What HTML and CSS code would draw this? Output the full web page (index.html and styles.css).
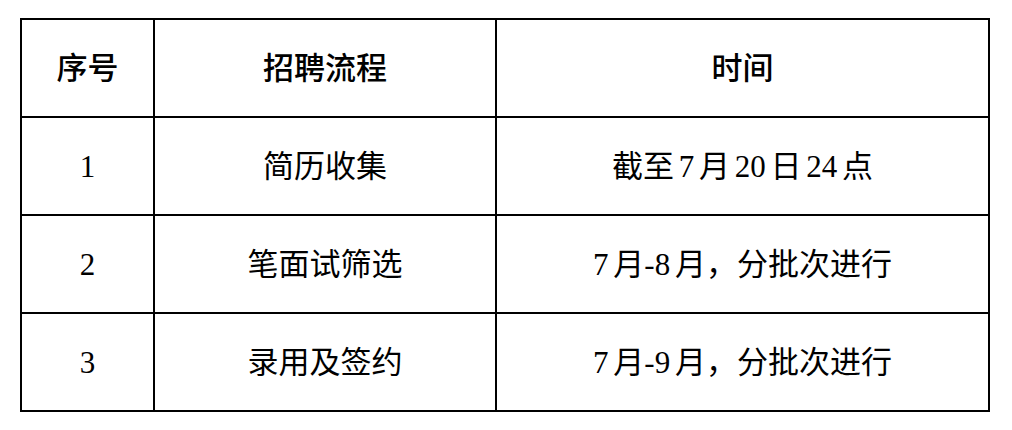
FILE: index.html
```html
<!DOCTYPE html>
<html lang="zh-CN">
<head>
<meta charset="utf-8">
<title>招聘流程</title>
<link rel="stylesheet" href="styles.css">
</head>
<body>
<table class="schedule">
  <colgroup>
    <col class="c-no">
    <col class="c-step">
    <col class="c-time">
  </colgroup>
  <thead>
    <tr>
      <th>序号</th>
      <th>招聘流程</th>
      <th>时间</th>
    </tr>
  </thead>
  <tbody>
    <tr>
      <td>1</td>
      <td>简历收集</td>
      <td>截至 7 月 20 日 24 点</td>
    </tr>
    <tr>
      <td>2</td>
      <td>笔面试筛选</td>
      <td>7 月-8 月，分批次进行</td>
    </tr>
    <tr>
      <td>3</td>
      <td>录用及签约</td>
      <td>7 月-9 月，分批次进行</td>
    </tr>
  </tbody>
</table>
</body>
</html>
```

FILE: styles.css
```css
html, body {
  margin: 0;
  padding: 0;
  background: #ffffff;
}

body {
  padding: 18px 0 0 20px;
  font-family: "Liberation Serif", "Noto Sans CJK SC", serif;
  color: #000000;
}

.schedule {
  border-collapse: collapse;
  table-layout: fixed;
  width: 968px;
}

.c-no { width: 133px; }
.c-step { width: 342px; }
.c-time { width: 493px; }

.schedule th,
.schedule td {
  border: 2px solid #000000;
  height: 98px;
  padding: 0;
  text-align: center;
  vertical-align: middle;
  font-size: 31px;
  line-height: 1;
  word-spacing: -3px;
  box-sizing: border-box;
}

.schedule th {
  font-weight: 500;
}

.schedule td {
  font-weight: 400;
}
```
